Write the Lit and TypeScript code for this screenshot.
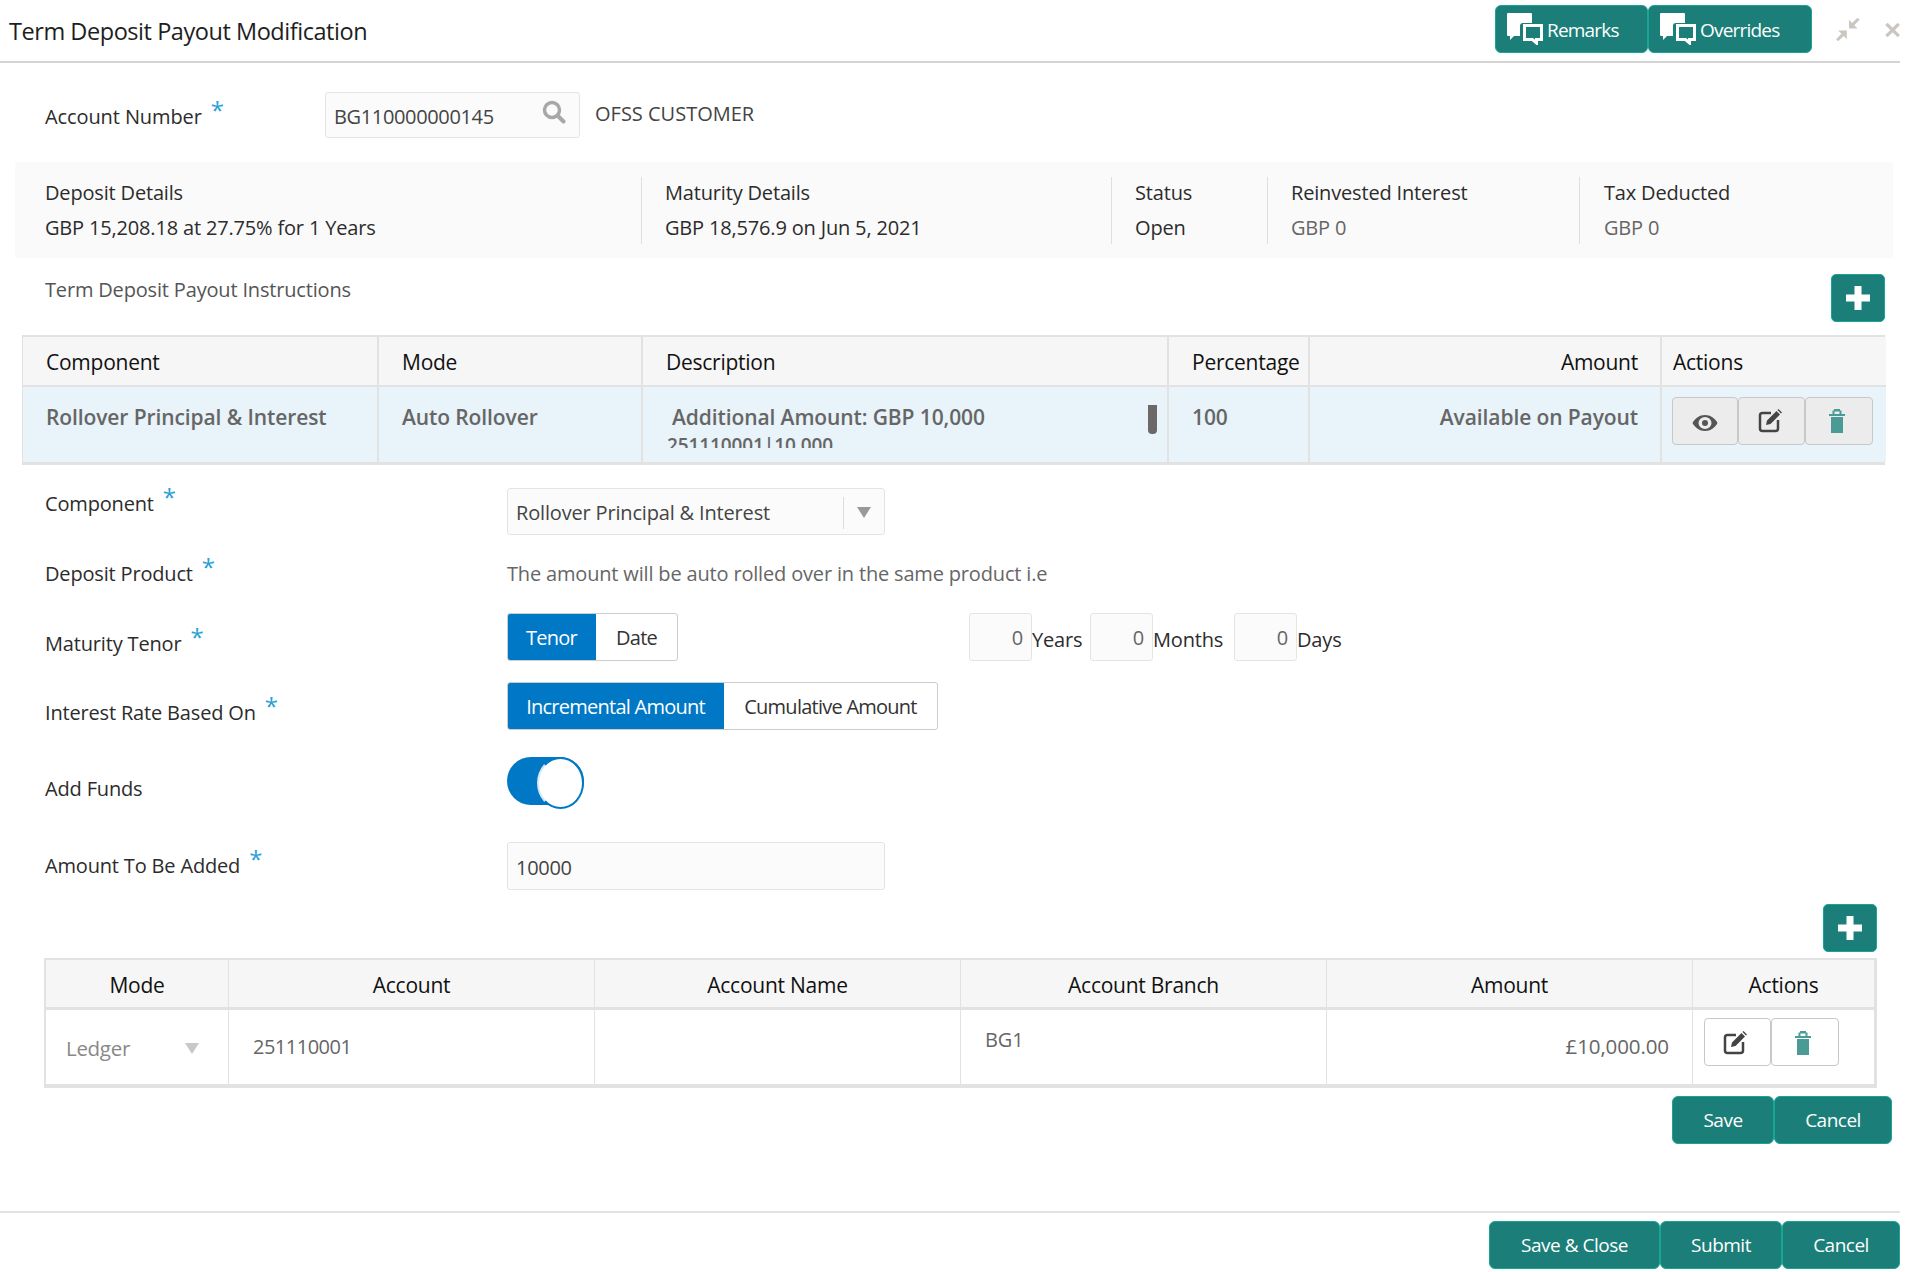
import { LitElement, html, css } from "lit";
import { customElement } from "lit/decorators.js";

const bubbles = html`<svg viewBox="0 0 36 32" width="36" height="32"><path fill="#fff" d="M1 0h23a1 1 0 0 1 1 1v9H16a3 3 0 0 0-3 3v10H7l-4 4v-4H1a1 1 0 0 1-1-1V1a1 1 0 0 1 1-1z"/><path fill="none" stroke="#fff" stroke-width="3" d="M17.500 12.500h17v14h-5v3.500l-4-3.500h-8z"/></svg>`;
const plus = html`<svg viewBox="0 0 24 24" width="24" height="24"><path fill="#fff" d="M8.500 0h7v8.500H24v7h-8.500V24h-7v-8.500H0v-7h8.500z"/></svg>`;
const eye = html`<svg viewBox="0 0 26 18" width="26" height="18"><path fill="#555" d="M13 1C7.500 1 3 4.500 0.500 9 3 13.500 7.500 17 13 17s10-3.500 12.500-8C23 4.500 18.500 1 13 1z"/><ellipse cx="13" cy="9" rx="6.500" ry="6" fill="#ececec"/><circle cx="13" cy="9" r="3" fill="#555"/></svg>`;
const edit = html`<svg viewBox="0 0 24 24" width="24" height="24"><path fill="none" stroke="#444" stroke-width="2.500" d="M13 4H4.500A2.500 2.500 0 0 0 2 6.500v13A2.500 2.500 0 0 0 4.500 22h13a2.500 2.500 0 0 0 2.500-2.500V11"/><path fill="#444" d="M8 16l1-4.500L18.500 2l3.500 3.500L12.500 15zM19.500 1l1-1 3.500 3.500-1 1z"/></svg>`;
const trash = html`<svg viewBox="0 0 16 24" width="16" height="24"><path fill="#4a9a96" d="M2 8h12v16H2zM0 5h16v2H0zM5 0h6v1.500h1.500V5h-2V2.500h-5V5h-2V1.500H5z"/></svg>`;
const arrow = html`<svg viewBox="0 0 14 11" width="14" height="11"><path fill="currentColor" d="M0 0h14L7 11z"/></svg>`;
const star = html`<span class="star">*</span>`;

@customElement("app-root")
export class AppRoot extends LitElement {
  static styles = css`
    :host { display: block; width: 1916px; height: 1272px; overflow: hidden; background: #fff; color: #2c2c2c;
      font-family: "Open Sans", "Noto Sans", sans-serif; font-size: 20px; letter-spacing: -0.17px; }
    * { box-sizing: border-box; }
    .header { display: flex; align-items: center; width: 1900px; height: 63px; border-bottom: 2px solid #d4d4d4; padding: 0 0 0 9px; }
    .title { font-size: 23.500px; color: #1e1e1e; flex: 1; letter-spacing: -0.45px; }
    .btn { display: flex; align-items: center; justify-content: center; height: 48px; background: #1b7e78; color: #fff; border: 1px solid #17a596; border-radius: 6px; font-size: 19px; letter-spacing: -0.5px; }
    .hbtns { display: flex; align-items: center; padding-bottom: 3px; }
    .hbtns .btn { justify-content: flex-start; padding-left: 11px; gap: 4px; letter-spacing: -0.8px; }
    .hbtns span { padding-top: 2px; }
    .remarks { width: 153px; letter-spacing: -1px; } .overrides { width: 164px; }
    .winicons { display: flex; width: 88px; padding-left: 23px; gap: 24px; align-items: center; padding-bottom: 2px; }
    .acct { display: flex; align-items: center; height: 46px; margin-top: 29px; padding-left: 45px; }
    .acct .lbl { width: 280px; padding-top: 3px; letter-spacing: -0.1px; }
    .star { color: #2a9fd8; font-size: 24px; line-height: 20px; position: relative; top: -5px; margin-left: 9px; }
    .input { height: 46px; background: #fbfbfb; border: 1px solid #e4e4e4; border-radius: 3px; display: flex; align-items: center; padding: 0 8px; color: #444; }
    .acctinput { width: 255px; justify-content: space-between; padding-right: 13px; padding-top: 3px; letter-spacing: -0.35px; }
    .acctinput svg { margin-top: -9px; }
    .cust { margin-left: 15px; color: #444; padding-bottom: 4px; letter-spacing: 0; }
    .band { display: flex; margin: 24px 0 0 15px; width: 1878px; height: 96px; background: #fafafa; align-items: center; }
    .band > div { height: 67px; display: flex; flex-direction: column; justify-content: space-between; padding-left: 30px; border-left: 1px solid #dfdfdf; line-height: 32px; }
    .band > div:first-child { border: none; }
    .b1 { width: 626px; } .b2 { width: 470px; padding-left: 23px !important; } .b3 { width: 156px; padding-left: 23px !important; } .b4 { width: 312px; padding-left: 23px !important; } .b5 { width: 300px; padding-left: 24px !important; }
    .b4 span + span, .b5 span + span { color: #666; }
    .sect { display: flex; justify-content: space-between; width: 1885px; padding-left: 45px; margin-top: 16px; height: 61px; color: #555; }
    .sect span { padding-top: 2px; }
    .plus { width: 54px; height: 48px; background: #1b7e78; border: 1px solid #17a596; border-radius: 5px; display: flex; align-items: center; justify-content: center; }
    .t1 { margin-left: 22px; width: 1863px; border: solid #e2e2e2; border-width: 2px 0 3px 1px; }
    .row { display: grid; }
    .t1 .row { grid-template-columns: 356px 264px 526px 141px 352px 224px; }
    .th { background: #f6f6f6; height: 50px; display: flex; align-items: center; font-weight: 500; font-size: 21px; letter-spacing: -0.25px; color: #111; border-right: 2px solid #e2e2e2; border-bottom: 2px solid #e2e2e2; padding: 2px 0 0 23px; }
    .th.end { padding-left: 11px; }
    .td { height: 75px; display: flex; border-right: 2px solid #e2e2e2; padding: 16px 0 0 23px; color: #666; font-size: 21px; letter-spacing: -0.1px; font-weight: 600; background: #e8f3fa; position: relative; overflow: hidden; }
    .td.end, .th.end { border-right: none; }
    .right { justify-content: flex-end; padding-right: 22px; }
    .desc { display: block; padding-left: 29px; line-height: 28px; }
    .desc i { display: block; font-style: normal; }
    .desc .l2 { height: 12px; overflow: hidden; font-size: 19px; margin-left: -5px; line-height: 18px; margin-top: 5px; }
    .scroll { position: absolute; left: 505px; top: 18px; width: 9px; height: 29px; background: #6d6868; border-radius: 0 0 4px 4px; }
    .ab { height: 48px; display: flex; align-items: center; justify-content: center; border: 1px solid #c8c8c8; border-radius: 4px; background: #ececec; }
    .t1 .acts { padding: 10px 0 0 10px; }
    .t1 .a1 { width: 66px; padding-top: 4px; } .t1 .a2 { width: 67px; padding: 0 3px 1px 0; } .t1 .a3 { width: 68px; padding-right: 5px; }
    .form { margin-top: 23px; padding-left: 45px; display: flex; flex-direction: column; }
    .f { display: grid; grid-template-columns: 462px 1fr; }
    .f1 { height: 47px; } .f2 { height: 48px; margin-top: 14px; align-items: center; } .f3 { height: 48px; margin-top: 16px; } .f4 { height: 48px; margin-top: 21px; } .f5 { height: 48px; margin-top: 27px; } .f6 { height: 48px; margin-top: 37px; }
    .f1 .lab { padding-top: 2px; } .f3 .lab { padding-top: 17px; } .f4 .lab { padding-top: 17px; } .f5 .lab { padding-top: 18px; } .f6 .lab { padding-top: 10px; }
    .sel { width: 378px; height: 47px; padding-right: 0; justify-content: space-between; padding-top: 2px; }
    .sel .ar { width: 41px; height: 32px; border-left: 1px solid #ddd; display: flex; align-items: center; justify-content: center; color: #999; }
    .hint { color: #666; }
    .ctl { display: flex; align-items: flex-start; }
    .seg { display: flex; height: 48px; border: 1px solid #ccc; border-radius: 3px; overflow: hidden; color: #333; letter-spacing: -0.75px; }
    .seg span { display: flex; align-items: center; justify-content: center; }
    .seg .on { background: #0078c6; color: #fff; margin: -1px 0 -1px -1px; }
    .ten { width: 89px; } .dat { width: 81px; } .inc { width: 217px; } .cum { width: 213px; }
    .dur { display: flex; margin-left: 291px; }
    .num { width: 63px; height: 48px; justify-content: flex-end; color: #666; }
    .dur span { padding-top: 11px; line-height: 32px; color: #2c2c2c; }
    .yr { width: 58px; } .mo { width: 81px; }
    .toggle { width: 77px; height: 48px; border-radius: 24px; background: #0078c6; position: relative; }
    .toggle::after { content: ""; position: absolute; right: 0; top: 0; width: 43px; height: 48px; border-radius: 50%; background: #fff; border: 2px solid #0078c6; border-left-color: #d8e8f3; }
    .wide { width: 378px; height: 48px; padding-top: 2px; letter-spacing: -0.3px; }
    .plus2 { margin: 14px 0 6px 1823px; }
    .t2 { margin-left: 44px; width: 1833px; border: 2px solid #e2e2e2; }
    .t2 .row { grid-template-columns: 183px 366px 366px 366px 366px 1fr; }
    .t2 .th { justify-content: center; padding: 3px 0 0; border-right: 1px solid #e2e2e2; border-bottom-width: 3px; }
    .t2 .td { background: #fff; height: 76px; border-right: 1px solid #e2e2e2; border-bottom: 2px solid #e2e2e2; padding: 0; align-items: center; color: #666; font-size: 20px; font-weight: 400; }
    .t2 .ledger { justify-content: space-between; padding: 2px 29px 0 20px; color: #888; font-size: 20.500px; letter-spacing: -0.3px; }
    .ledger svg { color: #c8c8c8; }
    .t2 .acc { padding: 0 0 2px 24px; font-weight: 500; letter-spacing: -0.5px; }
    .t2 .br { align-items: flex-start; padding: 16px 0 0 24px; font-weight: 500; }
    .t2 .amt { justify-content: flex-end; padding: 0 23px 2px 0; font-weight: 500; font-size: 20.500px; }
    .t2 .acts { padding: 8px 0 0 11px; align-items: flex-start; }
    .t2 .ab { background: #fff; }
    .t2 .a2 { width: 67px; padding: 1px 5px 0 0; } .t2 .a3 { width: 68px; padding: 1px 4px 0 0; }
    .acts { display: flex; }
    .btns { display: flex; justify-content: flex-end; }
    .inner { width: 1892px; margin-top: 8px; }
    .sv { width: 102px; } .cn { width: 118px; }
    .foot { width: 1900px; margin-top: 67px; border-top: 2px solid #e2e2e2; padding-top: 8px; }
    .sc { width: 171px; } .sb { width: 122px; } .cf { width: 118px; }
  `;

  render() {
    return html`
      <div class="header">
        <div class="title">Term Deposit Payout Modification</div>
        <div class="hbtns">
          <div class="btn remarks">${bubbles}<span>Remarks</span></div>
          <div class="btn overrides">${bubbles}<span>Overrides</span></div>
        </div>
        <div class="winicons">
          <svg viewBox="0 0 24 24" width="27" height="27"><path fill="#cbc6c2" d="M13 11V3l3 3 5-5 2 2-5 5 3 3zM11 13v8l-3-3-5 5-2-2 5-5-3-3z"/></svg>
          <svg viewBox="0 0 16 16" width="16" height="16"><path fill="none" stroke="#cbc6c2" stroke-width="3.500" d="M1.500 1.500l13 13M14.500 1.500l-13 13"/></svg>
        </div>
      </div>
      <div class="acct">
        <div class="lbl">Account Number${star}</div>
        <div class="input acctinput"><span>BG110000000145</span>
          <svg viewBox="0 0 24 24" width="24" height="24"><circle cx="10" cy="10" r="7.500" fill="none" stroke="#a8a8a8" stroke-width="3.500"/><path d="M15.500 15.500l6 6" stroke="#a8a8a8" stroke-width="4" stroke-linecap="round"/></svg>
        </div>
        <div class="cust">OFSS CUSTOMER</div>
      </div>
      <div class="band">
        <div class="b1"><span>Deposit Details</span><span>GBP 15,208.18 at 27.75% for 1 Years</span></div>
        <div class="b2"><span>Maturity Details</span><span>GBP 18,576.9 on Jun 5, 2021</span></div>
        <div class="b3"><span>Status</span><span>Open</span></div>
        <div class="b4"><span>Reinvested Interest</span><span>GBP 0</span></div>
        <div class="b5"><span>Tax Deducted</span><span>GBP 0</span></div>
      </div>
      <div class="sect"><span>Term Deposit Payout Instructions</span><div class="plus">${plus}</div></div>
      <div class="t1">
        <div class="row">
          <div class="th">Component</div><div class="th">Mode</div><div class="th">Description</div>
          <div class="th">Percentage</div><div class="th right">Amount</div><div class="th end">Actions</div>
        </div>
        <div class="row">
          <div class="td">Rollover Principal &amp; Interest</div>
          <div class="td">Auto Rollover</div>
          <div class="td desc"><i>Additional Amount: GBP 10,000</i><div class="l2">251110001|10,000</div><div class="scroll"></div></div>
          <div class="td">100</div>
          <div class="td right">Available on Payout</div>
          <div class="td end acts"><div class="ab a1">${eye}</div><div class="ab a2">${edit}</div><div class="ab a3">${trash}</div></div>
        </div>
      </div>
      <div class="form">
        <div class="f f1"><div class="lab">Component${star}</div>
          <div class="input sel"><span>Rollover Principal &amp; Interest</span><div class="ar">${arrow}</div></div></div>
        <div class="f f2"><div class="lab">Deposit Product${star}</div><div class="hint">The amount will be auto rolled over in the same product i.e</div></div>
        <div class="f f3"><div class="lab">Maturity Tenor${star}</div>
          <div class="ctl">
            <div class="seg"><span class="on ten">Tenor</span><span class="dat">Date</span></div>
            <div class="dur"><div class="input num">0</div><span class="yr">Years</span><div class="input num">0</div><span class="mo">Months</span><div class="input num">0</div><span>Days</span></div>
          </div></div>
        <div class="f f4"><div class="lab">Interest Rate Based On${star}</div>
          <div class="ctl"><div class="seg"><span class="on inc">Incremental Amount</span><span class="cum">Cumulative Amount</span></div></div></div>
        <div class="f f5"><div class="lab">Add Funds</div><div class="toggle"></div></div>
        <div class="f f6"><div class="lab">Amount To Be Added${star}</div><div class="input wide">10000</div></div>
      </div>
      <div class="plus plus2">${plus}</div>
      <div class="t2">
        <div class="row">
          <div class="th">Mode</div><div class="th">Account</div><div class="th">Account Name</div><div class="th">Account Branch</div><div class="th">Amount</div><div class="th end">Actions</div>
        </div>
        <div class="row">
          <div class="td ledger"><span>Ledger</span>${arrow}</div>
          <div class="td acc">251110001</div>
          <div class="td"></div>
          <div class="td br">BG1</div>
          <div class="td amt">£10,000.00</div>
          <div class="td end acts"><div class="ab a2">${edit}</div><div class="ab a3">${trash}</div></div>
        </div>
      </div>
      <div class="btns inner"><div class="btn sv">Save</div><div class="btn cn">Cancel</div></div>
      <div class="btns foot"><div class="btn sc">Save &amp; Close</div><div class="btn sb">Submit</div><div class="btn cf">Cancel</div></div>
    `;
  }
}
